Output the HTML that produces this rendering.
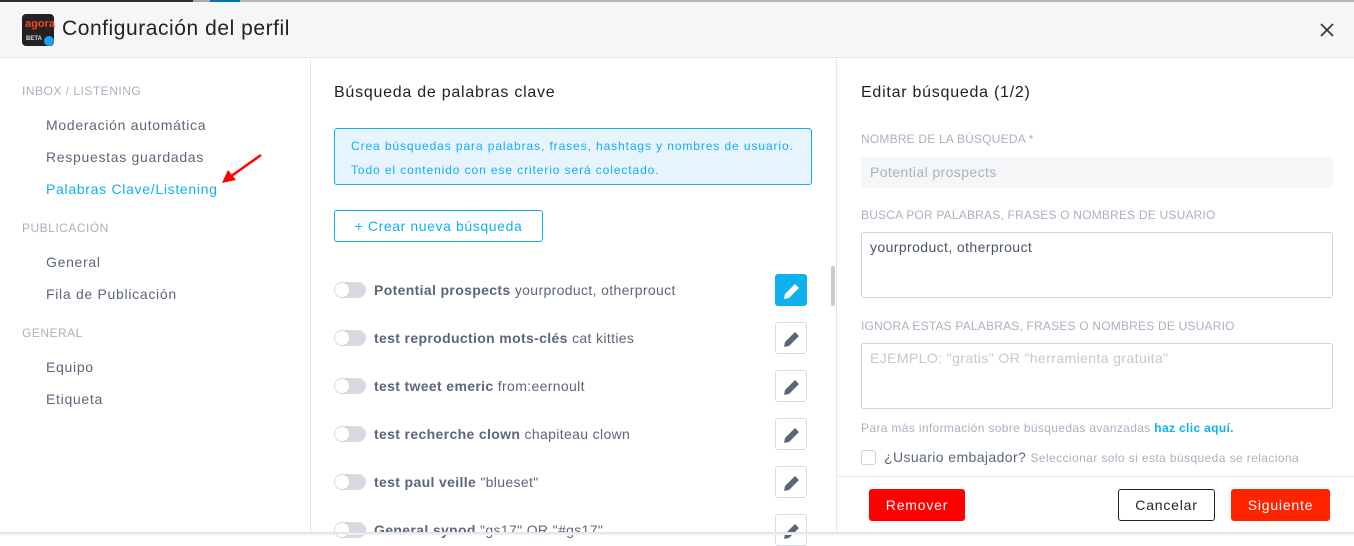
<!DOCTYPE html>
<html><head><meta charset="utf-8"><style>
*{box-sizing:border-box;margin:0;padding:0}
body{width:1354px;height:535px;overflow:hidden;background:#fff;font-family:"Liberation Sans",sans-serif;position:relative;color:#5b6779}
.a{position:absolute;white-space:nowrap}
.cap{font-size:12px;color:#a9b1bf;letter-spacing:.5px}
.nav{font-size:14px;color:#5b6779;left:46px;letter-spacing:.7px}
.row .tg{position:absolute;left:334px;width:32px;height:16px;border-radius:8px;background:#d6d9e0}
.row .tg:after{content:"";position:absolute;left:1px;top:1px;width:14px;height:14px;border-radius:50%;background:#fff}
.row .t{position:absolute;left:374px;font-size:14px;color:#5b6779;letter-spacing:.35px}
.row .t b{font-weight:bold}
.eb{position:absolute;left:775px;width:32px;height:32px;border:1px solid #d6dae2;border-radius:3px;background:#fff}
.eb svg{position:absolute;left:6px;top:6px}
.lbl{font-size:12px;color:#a9b1bf;left:861px;letter-spacing:.2px}
.btn{position:absolute;height:32px;border-radius:3px;font-size:14px;text-align:center;line-height:32px;letter-spacing:.8px}
</style></head><body>
<div class="a" style="left:0;top:0;width:1354px;height:2px;background:#2a2d31"></div>
<div class="a" style="left:193px;top:0;width:48px;height:2px;background:#aaa"></div>
<div class="a" style="left:210px;top:0;width:30px;height:2px;background:#0073b1"></div>
<div class="a" style="left:240px;top:0;width:1114px;height:2px;background:#b4b7bc"></div>
<div class="a" style="left:0;top:2px;width:1354px;height:56px;background:#f5f6f8;border-bottom:1px solid #e2e5ea"></div>
<div class="a" style="left:22px;top:14px;width:32px;height:32px;border-radius:4px;background:#222"><div style="color:#f04a1c;font-size:11px;font-weight:bold;position:absolute;left:3px;top:4px">agora</div><div style="color:#ddd;font-size:6px;position:absolute;left:4px;top:22px;font-weight:bold">BETA</div><div style="position:absolute;right:0;bottom:0;width:10px;height:10px;border-radius:50%;background:#1da1f2"></div></div>
<div class="a" style="left:62px;top:17px;font-size:21px;color:#222;letter-spacing:.55px">Configuración del perfil</div>
<svg class="a" style="left:1319px;top:22px" width="16" height="16"><path d="M2 2L14 14M14 2L2 14" stroke="#333" stroke-width="1.6"/></svg>
<div class="a" style="left:310px;top:59px;width:1px;height:476px;background:#e2e5ea"></div>
<div class="a" style="left:836px;top:59px;width:1px;height:476px;background:#e2e5ea"></div>

<div class="a cap" style="left:22px;top:84px">INBOX / LISTENING</div>
<div class="a nav" style="top:117px">Moderación automática</div>
<div class="a nav" style="top:149px">Respuestas guardadas</div>
<div class="a nav" style="top:181px;color:#0fb0f0">Palabras Clave/Listening</div>
<svg class="a" style="left:220px;top:153px" width="44" height="32"><path d="M41 2L10 24" stroke="#f00" stroke-width="2.5"/><path d="M2 30L8 17L16 27Z" fill="#f00"/></svg>
<div class="a cap" style="left:22px;top:221px">PUBLICACIÓN</div>
<div class="a nav" style="top:254px">General</div>
<div class="a nav" style="top:286px">Fila de Publicación</div>
<div class="a cap" style="left:22px;top:326px">GENERAL</div>
<div class="a nav" style="top:359px">Equipo</div>
<div class="a nav" style="top:391px">Etiqueta</div>

<div class="a" style="left:334px;top:84px;font-size:16px;color:#222;letter-spacing:.75px">Búsqueda de palabras clave</div>
<div class="a" style="left:334px;top:128px;width:478px;height:57px;border:1px solid #0fb0f0;border-radius:3px;background:#e8f4fd;color:#0fb0f0;font-size:12px;padding:5px 16px;line-height:24px;letter-spacing:.9px">Crea búsquedas para palabras, frases, hashtags y nombres de usuario.<br>Todo el contenido con ese criterio será colectado.</div>
<div class="a" style="left:334px;top:210px;width:209px;height:32px;border:1px solid #0fb0f0;border-radius:3px;color:#0fb0f0;font-size:14px;line-height:30px;text-align:center;letter-spacing:.6px">+ Crear nueva búsqueda</div>

<div class="row"><div class="tg" style="top:282px"></div><div class="t" style="top:282px"><b>Potential prospects</b> yourproduct, otherprouct</div></div>
<div class="eb" style="top:274px;background:#0fb0f0;border-color:#0fb0f0"><svg width="20" height="20"><path d="M2 18L3 13L13 3L17 7L7 17Z" fill="#fff"/></svg></div>
<div class="row"><div class="tg" style="top:330px"></div><div class="t" style="top:330px"><b>test reproduction mots-clés</b> cat kitties</div></div>
<div class="eb" style="top:322px"><svg width="20" height="20"><path d="M2 18L3 13L13 3L17 7L7 17Z" fill="#5b6779"/></svg></div>
<div class="row"><div class="tg" style="top:378px"></div><div class="t" style="top:378px"><b>test tweet emeric</b> from:eernoult</div></div>
<div class="eb" style="top:370px"><svg width="20" height="20"><path d="M2 18L3 13L13 3L17 7L7 17Z" fill="#5b6779"/></svg></div>
<div class="row"><div class="tg" style="top:426px"></div><div class="t" style="top:426px"><b>test recherche clown</b> chapiteau clown</div></div>
<div class="eb" style="top:418px"><svg width="20" height="20"><path d="M2 18L3 13L13 3L17 7L7 17Z" fill="#5b6779"/></svg></div>
<div class="row"><div class="tg" style="top:474px"></div><div class="t" style="top:474px"><b>test paul veille</b> "blueset"</div></div>
<div class="eb" style="top:466px"><svg width="20" height="20"><path d="M2 18L3 13L13 3L17 7L7 17Z" fill="#5b6779"/></svg></div>
<div class="row"><div class="tg" style="top:522px"></div><div class="t" style="top:522px"><b>General synod</b> "gs17" OR "#gs17"</div></div>
<div class="eb" style="top:514px"><svg width="20" height="20"><path d="M2 18L3 13L13 3L17 7L7 17Z" fill="#5b6779"/></svg></div>
<div class="a" style="left:831px;top:266px;width:4px;height:40px;background:#c8ccd2;border-radius:2px"></div>

<div class="a" style="left:861px;top:84px;font-size:16px;color:#222;letter-spacing:.75px">Editar búsqueda (1/2)</div>
<div class="a lbl" style="top:132px">NOMBRE DE LA BÚSQUEDA *</div>
<div class="a" style="left:861px;top:157px;width:472px;height:31px;background:#f5f6f8;border-radius:3px;font-size:14px;color:#a9b1bf;padding:7px 9px;letter-spacing:.4px">Potential prospects</div>
<div class="a lbl" style="top:208px">BUSCA POR PALABRAS, FRASES O NOMBRES DE USUARIO</div>
<div class="a" style="left:861px;top:232px;width:472px;height:66px;border:1px solid #cfd4dc;border-radius:3px;font-size:14px;color:#4a5568;padding:6px 8px;letter-spacing:.4px">yourproduct, otherprouct</div>
<div class="a lbl" style="top:319px">IGNORA ESTAS PALABRAS, FRASES O NOMBRES DE USUARIO</div>
<div class="a" style="left:861px;top:343px;width:472px;height:66px;border:1px solid #cfd4dc;border-radius:3px;font-size:14px;color:#c3c9d2;padding:6px 8px;letter-spacing:.4px">EJEMPLO: "gratis" OR "herramienta gratuita"</div>
<div class="a" style="left:861px;top:421px;font-size:12px;color:#a9b1bf;letter-spacing:.35px">Para más información sobre búsquedas avanzadas <span style="color:#0fb0f0;font-weight:bold">haz clic aquí.</span></div>
<div class="a" style="left:861px;top:450px;width:15px;height:15px;border:1px solid #cfd4dc;border-radius:3px"></div>
<div class="a" style="left:884px;top:449px;font-size:14px;color:#5b6779;letter-spacing:.4px">¿Usuario embajador? <span style="font-size:12px;color:#a9b1bf">Seleccionar solo si esta búsqueda se relaciona</span></div>
<div class="a" style="left:837px;top:476px;width:517px;height:1px;background:#e2e5ea"></div>
<div class="btn" style="left:869px;top:489px;width:96px;background:#ff0000;color:#fff">Remover</div>
<div class="btn" style="left:1118px;top:489px;width:97px;border:1px solid #222;color:#222;line-height:30px">Cancelar</div>
<div class="btn" style="left:1231px;top:489px;width:99px;background:#ff2400;color:#fff">Siguiente</div>
<div class="a" style="left:0;top:532px;width:1354px;height:3px;background:#eceef2;border-top:1px solid #dde1e7"></div>
</body></html>
